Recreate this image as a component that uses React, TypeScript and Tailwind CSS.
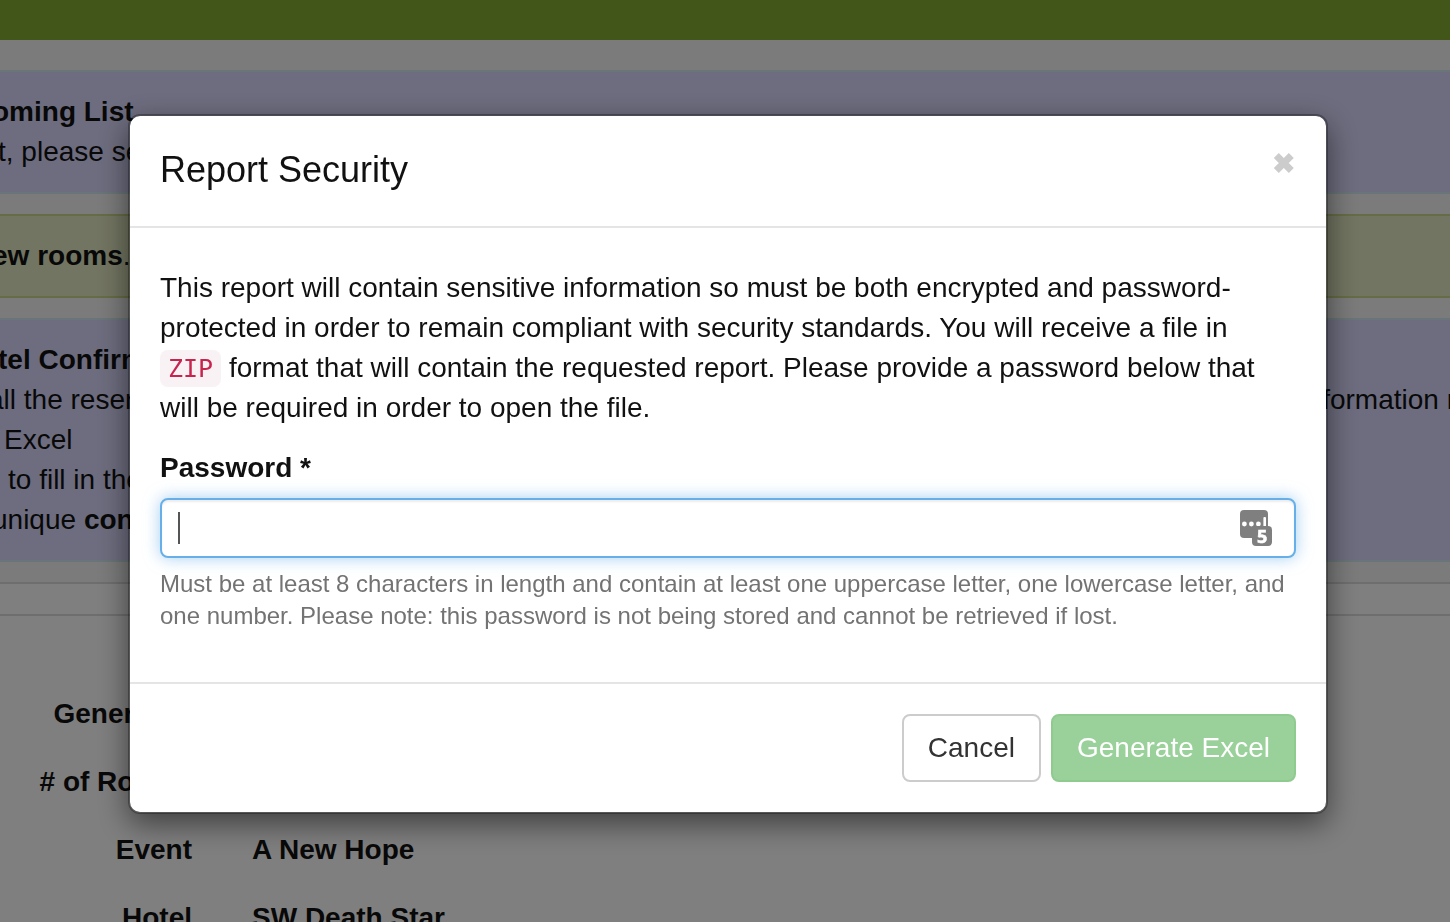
import { useState } from 'react'

const FACTS = [
  { label: 'Generated', value: '' },
  { label: '# of Rooms', value: '' },
  { label: 'Event', value: 'A New Hope' },
  { label: 'Hotel', value: 'SW Death Star' },
]

export default function App() {
  return (
    <div className="h-screen overflow-hidden bg-white font-['Liberation_Sans',Arial,sans-serif] text-[28px] leading-10 text-[#111111]">
      <ReportPage />
      <div className="fixed inset-0 flex items-start justify-center bg-black/50 pt-[114px] pl-1.5">
        <SecurityDialog />
      </div>
    </div>
  )
}

function ReportPage() {
  return (
    <main>
      <header className="h-10 bg-[#86ac34]" />

      <div className="space-y-5 bg-[#f7f7f7] pt-[30px] pb-5 whitespace-nowrap">
        <div className={infoClass}>
          <p className="-indent-2 font-bold">oming List</p>
          <p className="-indent-0.5">t, please select</p>
        </div>

        <div className="border-y-2 border-[#cdd98c] bg-[#e5ebc3] py-5">
          <p className="-indent-2">
            <strong>ew rooms</strong>.
          </p>
        </div>

        <div className={infoClass}>
          <p className="-indent-0.5 font-bold">tel Confirm</p>
          <div className="-mr-1.5 flex justify-between">
            <p className="-indent-3">all the reser</p>
            <p>information r</p>
          </div>
          <p className="indent-1">Excel</p>
          <p className="indent-2">to fill in the</p>
          <p className="-indent-2">
            unique <strong>con</strong>
          </p>
        </div>
      </div>

      <div className="h-[34px] border-y-2 border-[#dddddd]" />

      <dl className="space-y-7 pt-[78px] font-bold">
        {FACTS.map((fact) => (
          <div key={fact.label} className="flex gap-[60px]">
            <dt className="w-48 text-right">{fact.label}</dt>
            <dd>{fact.value}</dd>
          </div>
        ))}
      </dl>
    </main>
  )
}

function SecurityDialog() {
  const [password, setPassword] = useState('')

  return (
    <div
      role="dialog"
      aria-labelledby="dialog-title"
      className="w-full max-w-[1200px] rounded-xl border-2 border-black/30 bg-white bg-clip-padding shadow-[0_10px_30px_rgba(0,0,0,0.5)]"
    >
      <div className="flex items-start justify-between border-b-2 border-[#e5e5e5] px-[30px] pt-[30px] pb-8">
        <h2 id="dialog-title" className="text-[36px] leading-[48px]">
          Report Security
        </h2>
        <button type="button" aria-label="Close" className="py-1.5 text-[#cccccc]">
          <svg width="24" height="24" viewBox="0 0 24 24" fill="none" stroke="currentColor" strokeWidth="7">
            <path d="M4.3 3.5 19.3 18.5M19.3 3.5 4.3 18.5" />
          </svg>
        </button>
      </div>

      <form onSubmit={(e) => e.preventDefault()}>
        <div className="px-[30px] pt-10 pb-[50px]">
          <p>
            This report will contain sensitive information so must be both encrypted and
            password-protected in order to remain compliant with security standards. You will
            receive a file in{' '}
            <code className="rounded-lg bg-[#f9f2f4] px-2 py-1 font-['DejaVu_Sans_Mono',monospace] text-[25px] leading-none text-[#c7254e]">
              ZIP
            </code>{' '}
            format that will contain the requested report. Please provide a password below that
            will be required in order to open the file.
          </p>

          <label htmlFor="password" className="mt-5 block font-bold">
            Password *
          </label>
          <div className="relative mt-2.5">
            <input
              id="password"
              type="password"
              value={password}
              onChange={(e) => setPassword(e.target.value)}
              aria-describedby="password-help"
              className="block h-[60px] w-full rounded-lg border-2 border-[#66afe9] bg-white px-4 caret-transparent shadow-[inset_0_2px_2px_rgba(0,0,0,0.075),0_0_16px_rgba(102,175,233,0.6)] outline-none"
            />
            {!password && <span className="absolute top-3.5 left-[18px] h-8 w-0.5 bg-[#555555]" />}
            <PasswordManagerIcon />
          </div>
          <p id="password-help" className="mt-2.5 text-2xl text-[#737373]">
            Must be at least 8 characters in length and contain at least one uppercase letter, one
            lowercase letter, and one number. Please note: this password is not being stored and
            cannot be retrieved if lost.
          </p>
        </div>

        <div className="flex justify-end gap-2.5 border-t-2 border-[#e5e5e5] p-[30px]">
          <button type="button" className={`${buttonClass} border-[#cccccc] bg-white text-[#333333]`}>
            Cancel
          </button>
          <button type="submit" className={`${buttonClass} border-[#8fcb8f] bg-[#9ad09a] text-white`}>
            Generate Excel
          </button>
        </div>
      </form>
    </div>
  )
}

function PasswordManagerIcon() {
  return (
    <svg className="absolute top-3 right-6" width="32" height="36" viewBox="0 0 32 36" aria-hidden="true">
      <rect width="28" height="28" rx="4" fill="#7f7f7f" />
      <circle cx="4.4" cy="14" r="2.4" fill="white" />
      <circle cx="11.4" cy="14" r="2.4" fill="white" />
      <circle cx="18.4" cy="14" r="2.4" fill="white" />
      <rect x="23.4" y="7" width="2.6" height="12" rx="1" fill="white" />
      <rect x="12" y="16" width="20" height="20" rx="4" fill="#7f7f7f" />
      <text
        x="22.2"
        y="33"
        textAnchor="middle"
        fill="white"
        stroke="white"
        strokeWidth="0.6"
        className="font-['Open_Sans',sans-serif] text-[18px] font-bold"
      >
        5
      </text>
    </svg>
  )
}

const infoClass = 'border-y-2 border-[#d3eaf0] bg-[#dbdbff] py-5'

const buttonClass = 'rounded-lg border-2 px-6 py-3'
